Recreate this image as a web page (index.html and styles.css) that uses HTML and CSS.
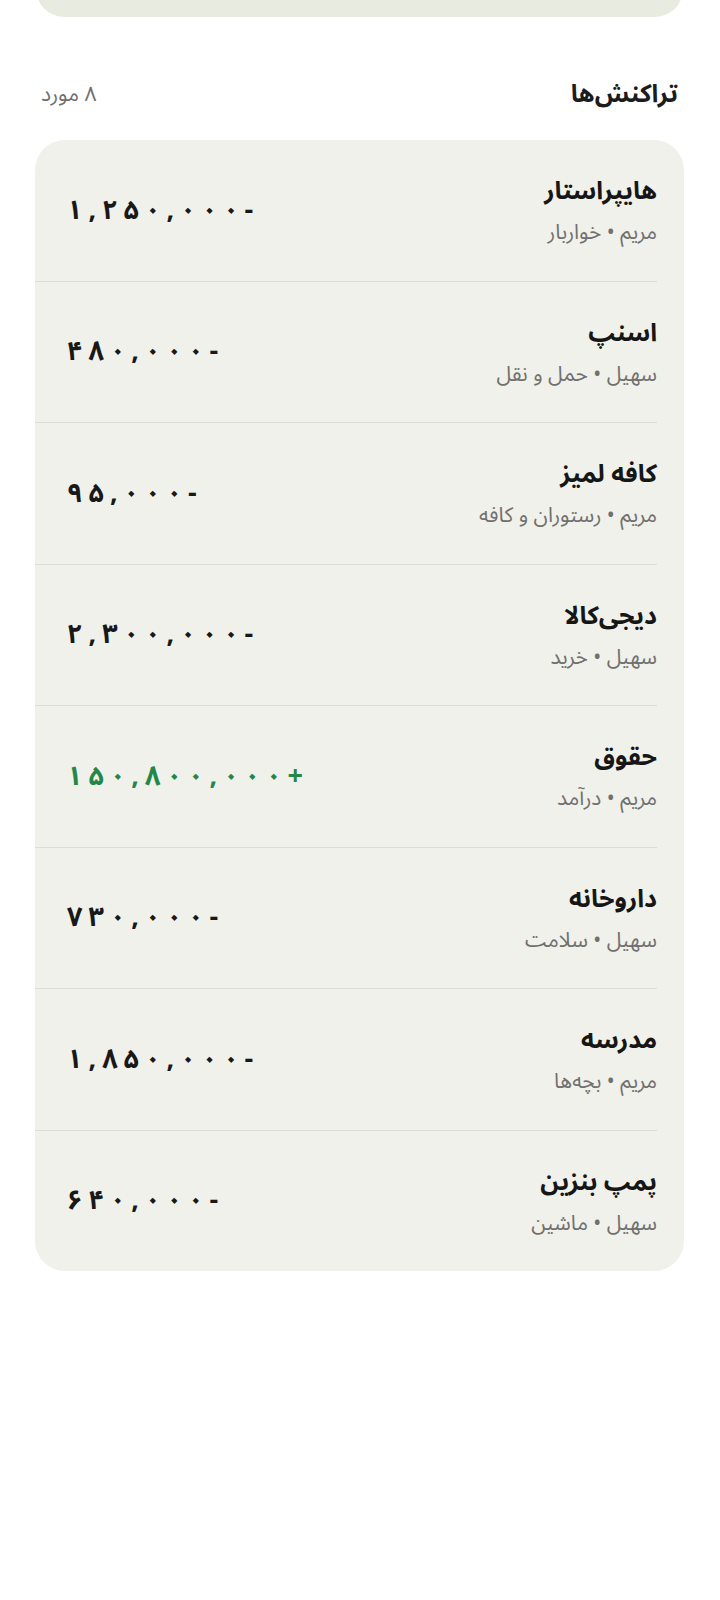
FILE: index.html
```html
<!DOCTYPE html>
<html lang="fa" dir="rtl">
<head>
  <meta charset="UTF-8">
  <title>تراکنش‌ها</title>
  <link rel="stylesheet" href="styles.css">
</head>
<body>

  <div class="top-card"></div>

  <div class="section-head">
    <h2>تراکنش‌ها</h2>
    <span class="count">۸ مورد</span>
  </div>

  <!-- amounts are split per character: Chrome ignores letter-spacing on Arabic-script digits -->
  <ul class="tx-list">
    <li class="tx">
      <div class="tx-info">
        <div class="tx-title">هایپراستار</div>
        <div class="tx-meta">مریم • خواربار</div>
      </div>
      <span class="tx-amount"><b>۱</b><b>,</b><b>۲</b><b>۵</b><b>۰</b><b>,</b><b>۰</b><b>۰</b><b>۰</b><b>-</b></span>
    </li>
    <li class="tx">
      <div class="tx-info">
        <div class="tx-title">اسنپ</div>
        <div class="tx-meta">سهیل • حمل و نقل</div>
      </div>
      <span class="tx-amount"><b>۴</b><b>۸</b><b>۰</b><b>,</b><b>۰</b><b>۰</b><b>۰</b><b>-</b></span>
    </li>
    <li class="tx">
      <div class="tx-info">
        <div class="tx-title">کافه لمیز</div>
        <div class="tx-meta">مریم • رستوران و کافه</div>
      </div>
      <span class="tx-amount"><b>۹</b><b>۵</b><b>,</b><b>۰</b><b>۰</b><b>۰</b><b>-</b></span>
    </li>
    <li class="tx">
      <div class="tx-info">
        <div class="tx-title">دیجی‌کالا</div>
        <div class="tx-meta">سهیل • خرید</div>
      </div>
      <span class="tx-amount"><b>۲</b><b>,</b><b>۳</b><b>۰</b><b>۰</b><b>,</b><b>۰</b><b>۰</b><b>۰</b><b>-</b></span>
    </li>
    <li class="tx">
      <div class="tx-info">
        <div class="tx-title">حقوق</div>
        <div class="tx-meta">مریم • درآمد</div>
      </div>
      <span class="tx-amount income"><b>۱</b><b>۵</b><b>۰</b><b>,</b><b>۸</b><b>۰</b><b>۰</b><b>,</b><b>۰</b><b>۰</b><b>۰</b><b>+</b></span>
    </li>
    <li class="tx">
      <div class="tx-info">
        <div class="tx-title">داروخانه</div>
        <div class="tx-meta">سهیل • سلامت</div>
      </div>
      <span class="tx-amount"><b>۷</b><b>۳</b><b>۰</b><b>,</b><b>۰</b><b>۰</b><b>۰</b><b>-</b></span>
    </li>
    <li class="tx">
      <div class="tx-info">
        <div class="tx-title">مدرسه</div>
        <div class="tx-meta">مریم • بچه‌ها</div>
      </div>
      <span class="tx-amount"><b>۱</b><b>,</b><b>۸</b><b>۵</b><b>۰</b><b>,</b><b>۰</b><b>۰</b><b>۰</b><b>-</b></span>
    </li>
    <li class="tx">
      <div class="tx-info">
        <div class="tx-title">پمپ بنزین</div>
        <div class="tx-meta">سهیل • ماشین</div>
      </div>
      <span class="tx-amount"><b>۶</b><b>۴</b><b>۰</b><b>,</b><b>۰</b><b>۰</b><b>۰</b><b>-</b></span>
    </li>
  </ul>

</body>
</html>
```

FILE: styles.css
```css
body {
  margin: 0;
  background-color: #fff;
  font-family: "Noto Sans Arabic", "DejaVu Sans", sans-serif;
  color: #1c1c1c;
}

.top-card {
  height: 17px;
  margin: 0 37px 0 36px;
  margin-top: -20px;
  padding-top: 20px;
  background-color: #e8ebe0;
  border-radius: 0 0 28px 28px;
}

.section-head {
  display: flex;
  justify-content: space-between;
  align-items: center;
  padding: 0 42px 0 41px;
  margin-top: 57px;
  height: 40px;
}

.section-head h2 {
  margin: 0;
  font-size: 25px;
  font-weight: bold;
}

.count {
  font-size: 21px;
  color: #6f6f6f;
}

.tx-list {
  list-style: none;
  margin: 26px 36px 0 35px;
  padding: 0;
  background-color: #f0f1ea;
  border-radius: 30px;
}

.tx {
  display: flex;
  justify-content: space-between;
  align-items: center;
  height: 140.5px;
  margin-right: 27px;
  padding-left: 29px;
  border-bottom: 1px solid #dcddd4;
}

.tx:last-child {
  border-bottom: none;
}

.tx-title {
  font-size: 25px;
  line-height: 42px;
  font-weight: bold;
  color: #161616;
  margin-bottom: 3px;
}

.tx-meta {
  font-size: 21px;
  line-height: 35px;
  color: #707070;
}

.tx-amount {
  display: flex;
  direction: ltr;
  unicode-bidi: isolate;
  font-size: 27px;
  color: #181818;
}

.tx-amount b {
  margin: 0 3px;
}

.tx-amount.income {
  color: #23874a;
}
```
